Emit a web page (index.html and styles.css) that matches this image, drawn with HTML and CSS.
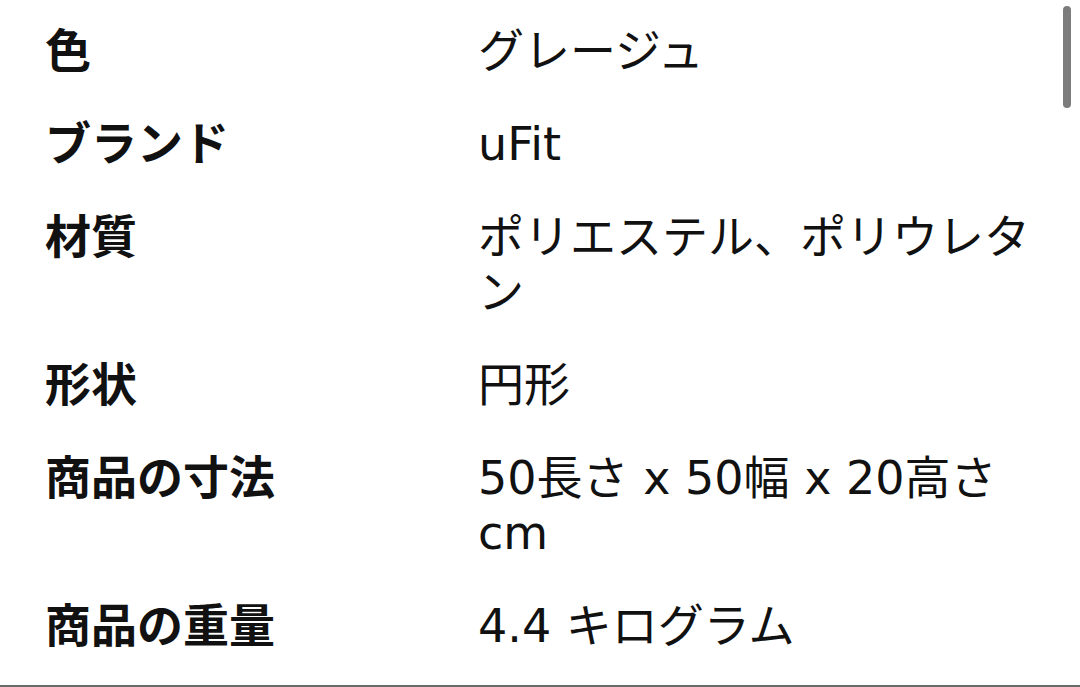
FILE: index.html
```html
<!DOCTYPE html>
<html lang="ja">
<head>
<meta charset="utf-8">
<link rel="stylesheet" href="styles.css">
</head>
<body>
<div class="frame">
  <div class="spec">
    <div class="row"><div class="label">色</div><div class="value">グレージュ</div></div>
    <div class="row"><div class="label">ブランド</div><div class="value">uFit</div></div>
    <div class="row"><div class="label">材質</div><div class="value">ポリエステル、ポリウレタン</div></div>
    <div class="row"><div class="label">形状</div><div class="value">円形</div></div>
    <div class="row"><div class="label">商品の寸法</div><div class="value">50長さ x 50幅 x 20高さ cm</div></div>
    <div class="row"><div class="label">商品の重量</div><div class="value">4.4 キログラム</div></div>
  </div>
  <div class="scrollbar"></div>
</div>
</body>
</html>
```

FILE: styles.css
```css
html, body {
  margin: 0;
  padding: 0;
  background: #ffffff;
}

.frame {
  position: relative;
  height: 687px;
  box-sizing: border-box;
  overflow: hidden;
  border-bottom: 2px solid #6a6a6a;
  background: #ffffff;
}

.spec {
  padding: 5px 46px 0 45px;
  color: #111111;
  font-family: "DejaVu Sans", "Noto Sans CJK JP", sans-serif;
  font-size: 46px;
  line-height: 55px;
}

.row {
  display: grid;
  grid-template-columns: 433px 1fr;
  padding: 19px 0;
}

.label {
  font-weight: 700;
}

.value {
  font-weight: 400;
}

.scrollbar {
  position: absolute;
  top: 6px;
  right: 9px;
  width: 8px;
  height: 102px;
  border-radius: 4px;
  background: #7c7c7c;
}
```
